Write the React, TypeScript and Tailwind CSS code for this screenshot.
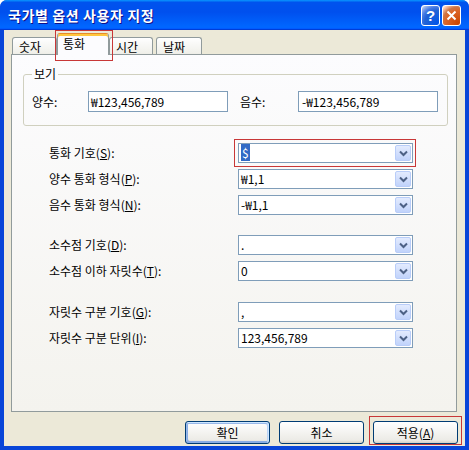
const Chevron = () => (
  <svg width="9" height="7" viewBox="0 0 9 7" fill="none">
    <path d="M1 1.5 L4.5 5 L8 1.5" stroke="#4d6185" strokeWidth="2" />
  </svg>
);

function Combo({ value, selected }: { value: string; selected?: boolean }) {
  return (
    <div className="flex h-[20px] w-[175px] items-center border border-[#7f9db9] bg-white">
      <div className="flex-1 pl-[2px] text-[12px] leading-[16px]">
        {selected ? <span className="bg-[#316ac5] px-[1px] text-white">{value}</span> : value}
      </div>
      <div className="mr-[1px] flex h-[16px] w-[16px] items-center justify-center rounded-[2px] border border-[#b9cdf9] bg-[linear-gradient(180deg,#e3ebfe,#c1d3fb)]">
        <Chevron />
      </div>
    </div>
  );
}

function Row({ label, key2, value, selected }: { label: string; key2: string; value: string; selected?: boolean }) {
  return (
    <div className="flex h-[20px] items-center">
      <div className="w-[189px] text-[12px] leading-[16px]">
        {label}(<u>{key2}</u>):
      </div>
      <div className="relative">
        <Combo value={value} selected={selected} />
        {selected && (
          <div className="pointer-events-none absolute -top-[4px] -bottom-[4px] -left-[4px] -right-[3px] border border-[#c83737]" />
        )}
      </div>
    </div>
  );
}

function Btn({ children, primary }: { children: React.ReactNode; primary?: boolean }) {
  return (
    <div
      className={`flex h-[23px] w-[85px] items-center justify-center rounded-[3px] border border-[#003c74] bg-[linear-gradient(180deg,#fff,#ecebe6_86%,#d6d0c5)] text-[12px] leading-[16px] ${
        primary
          ? 'shadow-[inset_-1px_1px_#cee7ff,inset_1px_2px_#98b8ea,inset_-2px_2px_#bcd4f6,inset_1px_-1px_#89ade4,inset_2px_-2px_#89ade4]'
          : ''
      }`}
    >
      {children}
    </div>
  );
}

const tabBase =
  'h-[17px] rounded-t-[3px] border border-b-0 border-[#919b9c] bg-[linear-gradient(180deg,#fff,#fafaf9_26%,#f0f0ea_95%,#ecebe5)] pl-[6px] pt-[1px] text-[12px] leading-[16px]';

export default function App() {
  return (
    <div className="flex h-[450px] w-[469px] flex-col overflow-hidden rounded-t-[7px] bg-[#0845d8] font-['Noto_Sans_CJK_KR','Noto_Sans',sans-serif] text-black">
      {/* title bar */}
      <div className="flex h-[30px] shrink-0 items-center justify-between bg-[linear-gradient(180deg,#0997ff,#0053ee_8%,#0050ee_40%,#06f_88%,#06f_93%,#005bff_95%,#003dd7_96%,#003dd7)] pl-[8px] pr-[8px]">
        <span className="text-[14px] font-bold leading-[18px] tracking-[0.6px] text-white [text-shadow:1px_1px_0_#0f1089]">
          국가별 옵션 사용자 지정
        </span>
        <div className="flex gap-[2px]">
          <div className="flex h-[21px] w-[19px] items-center justify-center rounded-[3px] border border-white bg-[radial-gradient(circle_at_90%_90%,#0054e9_0%,#2263d5_55%,#4479e4_70%,#a3bbec_90%,#fff_100%)] font-['Liberation_Sans',sans-serif] text-[15px] font-bold leading-none text-white">
            ?
          </div>
          <div className="flex h-[21px] w-[19px] items-center justify-center rounded-[3px] border border-white bg-[radial-gradient(circle_at_90%_90%,#cc4600_0%,#dc6527_55%,#cd7546_70%,#ffccb2_90%,#fff_100%)]">
            <svg width="11" height="11" viewBox="0 0 11 11">
              <path d="M1.5 1.5 L9.5 9.5 M9.5 1.5 L1.5 9.5" stroke="#fff" strokeWidth="2" />
            </svg>
          </div>
        </div>
      </div>

      {/* body */}
      <div className="mx-[4px] mb-[4px] flex flex-1 flex-col bg-[#ece9d8]">
        {/* tabs */}
        <div className="flex h-[24px] items-end pl-[8px]">
          <div className={`${tabBase} w-[45px]`}>숫자</div>
          <div className="relative z-10 -mb-[1px] h-[22px] w-[52px] rounded-t-[3px] border border-b-0 border-[#919b9c] border-t-[#e68b2c] bg-[#fcfcfe] pl-[5px] pt-[2px] text-[12px] leading-[16px] shadow-[inset_0_2px_#ffc73c]">
            통화
            <div className="pointer-events-none absolute -top-[4px] -bottom-[6px] -left-[3px] -right-[5px] border border-[#c83737]" />
          </div>
          <div className={`${tabBase} w-[44px]`}>시간</div>
          <div className={`${tabBase} ml-[3px] w-[46px]`}>날짜</div>
        </div>

        {/* panel */}
        <div className="ml-[7px] flex h-[358px] w-[446px] flex-col border border-[#919b9c] bg-[linear-gradient(180deg,#fcfcfe,#f4f3ee)] px-[11px] pt-[11px]">
          <fieldset className="h-[60px] w-[425px] rounded-[3px] border border-[#d0d0bf] p-0">
            <legend className="ml-[8px] px-[2px] text-[12px] leading-[16px]">보기</legend>
            <div className="mt-[9px] flex items-center pl-[8px] text-[12px] leading-[16px]">
              <div className="w-[56px]">양수:</div>
              <div className="h-[21px] w-[140px] border border-[#7f9db9] bg-white pl-[2px] leading-[19px]">₩123,456,789</div>
              <div className="ml-[12px] w-[58px]">음수:</div>
              <div className="h-[21px] w-[140px] border border-[#7f9db9] bg-white pl-[3px] leading-[19px]">-₩123,456,789</div>
            </div>
          </fieldset>

          <div className="mt-[17px] pl-[26px]">
            <div className="flex flex-col gap-[6px]">
              <Row label="통화 기호" key2="S" value="$" selected />
              <Row label="양수 통화 형식" key2="P" value="₩1,1" />
              <Row label="음수 통화 형식" key2="N" value="-₩1,1" />
            </div>
            <div className="mt-[20px] flex flex-col gap-[6px]">
              <Row label="소수점 기호" key2="D" value="." />
              <Row label="소수점 이하 자릿수" key2="T" value="0" />
            </div>
            <div className="mt-[21px] flex flex-col gap-[6px]">
              <Row label="자릿수 구분 기호" key2="G" value="," />
              <Row label="자릿수 구분 단위" key2="I" value="123,456,789" />
            </div>
          </div>
        </div>

        {/* buttons */}
        <div className="mt-[9px] flex justify-end gap-[9px] pr-[7px]">
          <Btn primary>확인</Btn>
          <Btn>취소</Btn>
          <div className="relative">
            <Btn>
              적용(<u>A</u>)
            </Btn>
            <div className="pointer-events-none absolute -top-[5px] -bottom-[1px] -left-[4px] -right-[4px] border border-[#c83737]" />
          </div>
        </div>
      </div>
    </div>
  );
}
